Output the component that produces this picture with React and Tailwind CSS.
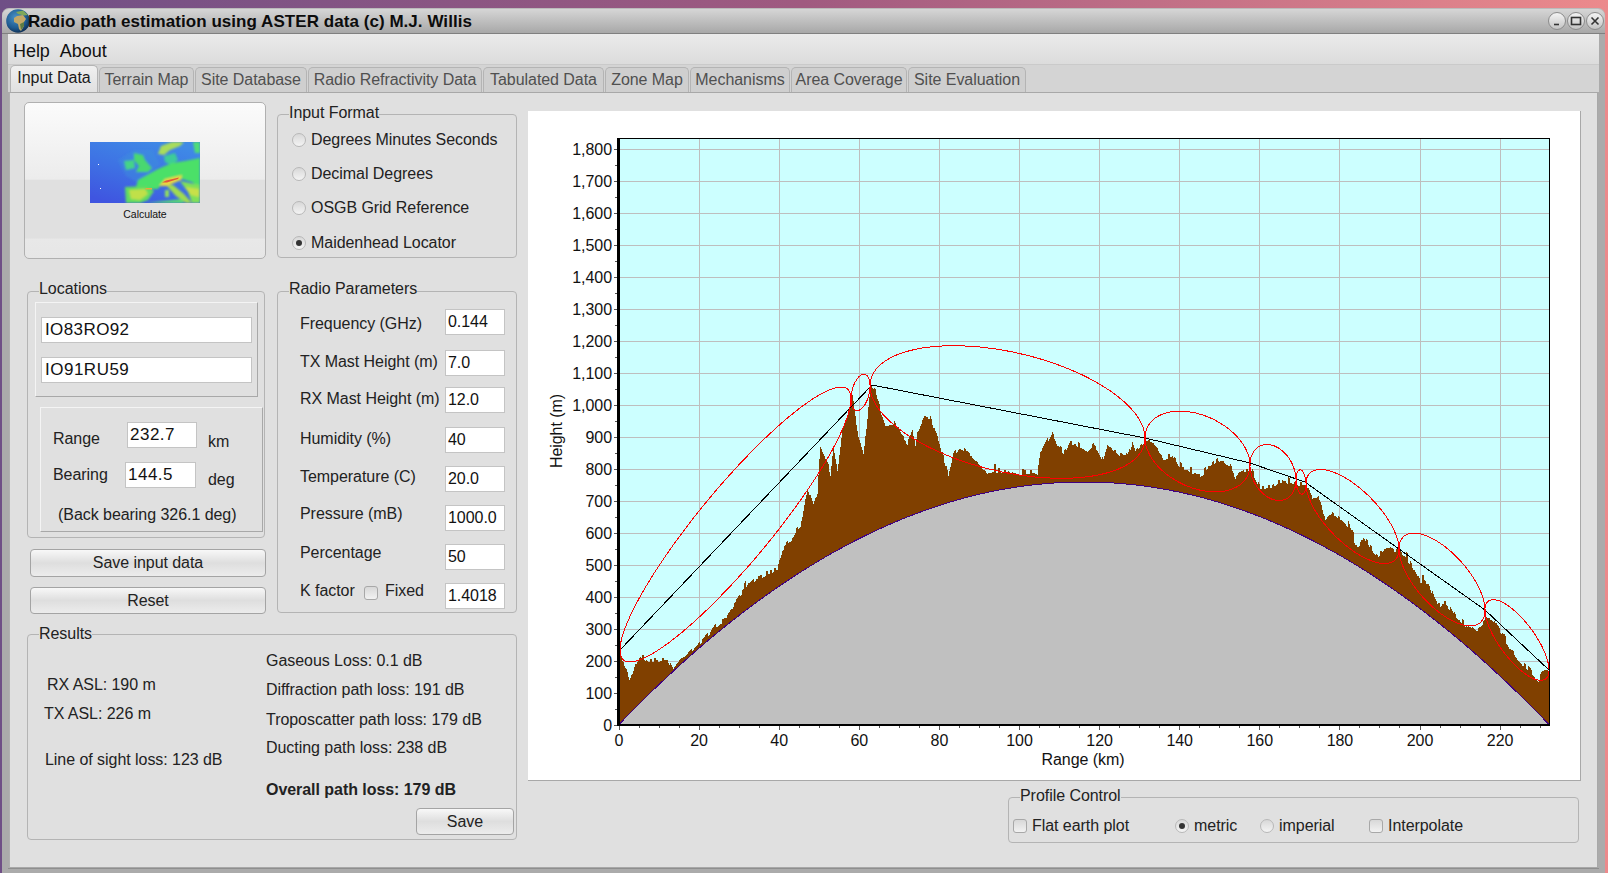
import React from "react";

const FONT = "font-['Liberation_Sans',Arial,sans-serif]";

// terrain outline in page pixels, read off the plot
const ridge = [
  [619, 645], [620, 658], [625, 667], [629, 679], [635, 665], [640, 655], [647, 660], [655, 660], [667, 660], [673, 668],
  [680, 660], [687, 652], [697, 645], [703, 640], [713, 627], [725, 620], [728, 612], [737, 600], [747, 585], [760, 577],
  [777, 568], [782, 550], [800, 527], [807, 488], [813, 505], [817, 493], [820, 445], [828, 463], [830, 478], [833, 448],
  [837, 475], [842, 430], [852, 398], [858, 438], [863, 455], [870, 388], [875, 390], [885, 427], [893, 423], [907, 443],
  [912, 428], [915, 445], [917, 432], [923, 417], [930, 417], [937, 438], [943, 457], [948, 475], [953, 452], [960, 448],
  [973, 457], [987, 472], [1000, 470], [1013, 475], [1033, 472], [1037, 475], [1040, 453], [1052, 432], [1055, 440], [1063, 453],
  [1070, 442], [1087, 450], [1093, 445], [1103, 460], [1107, 445], [1117, 453], [1127, 455], [1132, 443], [1135, 452], [1145, 442],
  [1153, 442], [1163, 458], [1172, 455], [1180, 467], [1200, 475], [1217, 460], [1230, 467], [1235, 477], [1250, 468], [1260, 487],
  [1270, 487], [1280, 482], [1293, 483], [1305, 485], [1312, 497], [1318, 495], [1325, 522], [1332, 513], [1347, 525], [1357, 547],
  [1363, 537], [1370, 547], [1377, 555], [1390, 548], [1400, 553], [1410, 563], [1420, 582], [1428, 583], [1437, 605], [1445, 603],
  [1457, 618], [1475, 632], [1482, 627], [1485, 615], [1493, 620], [1505, 640], [1517, 660], [1530, 670], [1537, 683], [1542, 670],
  [1549, 673],
];

const earthY = (x) => {
  const t = (x - 618.5) / 931;
  return 725 - 243 * 4 * t * (1 - t);
};

const buildTerrain = () => {
  let seed = 7;
  const rnd = () => {
    seed = (seed * 16807) % 2147483647;
    return seed / 2147483647;
  };
  let d = "M619 725";
  let i = 0;
  let jitter = 0;
  for (let x = 619; x <= 1549; x++) {
    while (ridge[i + 1] && ridge[i + 1][0] < x) i++;
    const [x0, y0] = ridge[i];
    const [x1, y1] = ridge[i + 1] || ridge[i];
    const y = y0 + ((y1 - y0) * (x - x0)) / (x1 - x0 || 1);
    if (x % 2 === 0) jitter = (rnd() - 0.5) * 5 - (rnd() > 0.93 ? 5 : 0);
    d += `V${Math.round(Math.min(y + jitter, earthY(x)))}H${x + 1}`;
  }
  return d + "V725Z";
};

const earthLine = () => {
  let d = "M618.5 725";
  for (let x = 620; x <= 1550; x += 2) d += `L${x} ${earthY(x).toFixed(1)}`;
  return d;
};

// a fresnel zone is the chord with the radius added above and below it
const zone = ([ax, ay], [bx, by], r) => {
  let d = "";
  for (let i = 0; i <= 120; i++) {
    const th = (i / 120) * Math.PI * 2;
    const t = (1 - Math.cos(th)) / 2;
    d += `${i ? "L" : "M"}${(ax + (bx - ax) * t).toFixed(1)} ${(ay + (by - ay) * t - r * Math.sin(th)).toFixed(1)}`;
  }
  return d + "Z";
};

const zones = [
  [[620, 650], [851, 399], 56],
  [[851, 399], [870, 386], 17],
  [[870, 386], [1145, 438], 61],
  [[1145, 438], [1250, 465], 38],
  [[1250, 465], [1296, 480], 27],
  [[1296, 480], [1306, 484], 12],
  [[1306, 484], [1399, 549], 34],
  [[1399, 549], [1485, 610], 35],
  [[1485, 610], [1549, 670], 27],
];

const xOf = (km) => 619 + km * 4.005;
const yOf = (m) => 725 - m * 0.32;
const heights = Array.from({ length: 19 }, (_, i) => i * 100);
const ranges = Array.from({ length: 12 }, (_, i) => i * 20);

const Chart = () => (
  <svg viewBox="528 111 1052 670" className="block w-[1052px] h-[670px]" shapeRendering="crispEdges">
    <rect x="619" y="138" width="931" height="587" fill="#ccffff" />
    {heights.map((m) => (
      <line key={m} x1="619" x2="1550" y1={yOf(m)} y2={yOf(m)} stroke="#bebebe" />
    ))}
    {ranges.map((km) => (
      <line key={km} x1={xOf(km)} x2={xOf(km)} y1="138" y2="725" stroke="#bebebe" />
    ))}
    <path d={buildTerrain()} fill="#804000" />
    <path d={earthLine() + "V725H618.5Z"} fill="#c0c0c0" />
    <path d={earthLine()} fill="none" stroke="#400080" />
    <polyline
      points="620,650 872,385 1145,438 1250,463 1305,482 1399,549 1485,610 1549,670"
      fill="none"
      stroke="#000"
    />
    {zones.map(([a, b, r], i) => (
      <path key={i} d={zone(a, b, r)} fill="none" stroke="#ff0000" />
    ))}
    <rect x="619" y="138" width="931" height="1" fill="#000" />
    <rect x="1549" y="138" width="1" height="588" fill="#000" />
    <rect x="617" y="138" width="3" height="588" fill="#000" />
    <rect x="617" y="724" width="933" height="2" fill="#000" />
    {Array.from({ length: 37 }, (_, i) => (
      <line key={i} x1={i % 2 ? 615 : 614} x2="617" y1={yOf(i * 50)} y2={yOf(i * 50)} stroke="#555" />
    ))}
    {Array.from({ length: 47 }, (_, i) => (
      <line key={i} x1={xOf(i * 5)} x2={xOf(i * 5)} y1="726" y2={i % 4 ? 728 : 730} stroke="#555" />
    ))}
    <g fontFamily="'Liberation Sans', Arial, sans-serif" fontSize="16" fill="#111" shapeRendering="auto">
      {heights.map((m) => (
        <text key={m} x="612" y={yOf(m) + 6} textAnchor="end">
          {m.toLocaleString("en-US")}
        </text>
      ))}
      {ranges.map((km) => (
        <text key={km} x={xOf(km)} y="746" textAnchor="middle">
          {km}
        </text>
      ))}
      <text x="1083" y="765" textAnchor="middle">Range (km)</text>
      <text transform="translate(562 431) rotate(-90)" textAnchor="middle">Height (m)</text>
    </g>
  </svg>
);

const EuropeMap = () => (
  <svg viewBox="0 0 110 61" className="block w-[110px] h-[61px] mx-auto">
    <defs>
      <linearGradient id="sea" x1="0.7" y1="0" x2="0.2" y2="1">
        <stop offset="0" stopColor="#3f8ae6" />
        <stop offset="0.5" stopColor="#3e72e4" />
        <stop offset="1" stopColor="#3f55e0" />
      </linearGradient>
      <filter id="soft" x="-5%" y="-5%" width="110%" height="110%"><feGaussianBlur stdDeviation="1" /></filter>
    </defs>
    <rect width="110" height="61" fill="url(#sea)" />
    <g filter="url(#soft)">
      <path d="M28 18L44 8 62 8 70 22 50 42 36 34Z" fill="#3e96da" opacity="0.35" />
      <path d="M68 12L71 4 82 0 94 0 90 4 80 8 74 13Z" fill="#a8dc5c" />
      <path d="M103 0H110V11H105Z" fill="#50dc78" />
      <path d="M74 14L85 11 88 18 81 23 75 20Z" fill="#3ecc98" />
      <path d="M44 11L53 13 55 18 62 26 58 30 46 30 49 24 44 18Z" fill="#48d870" />
      <path d="M34 19L44 18 45 26 36 28Z" fill="#44d488" />
      <path d="M48 38L68 27 82 21 95 19 110 16V46L102 40 92 37 82 37 72 41 68 47 60 47 46 45Z" fill="#4ce068" />
      <path d="M35 45L56 44 64 49 58 58 50 61H36Z" fill="#60dc60" />
      <path d="M39 48L55 47 58 52 50 58 41 57Z" fill="#c0e048" />
      <path d="M90 39L110 43V61H102L98 50Z" fill="#80e058" />
      <path d="M95 45L109 47 109 55 101 53Z" fill="#c8e048" />
      <path d="M76 43L83 43 94 52 102 61 96 61 86 54Z" fill="#a0dc50" />
      <path d="M75 48H79V55H75Z" fill="#90dc60" />
      <path d="M56 61L92 57 94 61Z" fill="#58dc70" />
      <path d="M69 44L75 37 92 33 91 38 77 44Z" fill="#e8d840" />
    </g>
    <path d="M72 40.5L76 38.5 89 35.5 88 37 77 40.5Z" fill="#e0583c" />
    <path d="M55.5 46L62 46 62 47.5 55.5 47.5Z" fill="#e8a83c" />
    <g shapeRendering="crispEdges">
      <rect x="8" y="22" width="1" height="1" fill="#fff" />
      <rect x="10" y="46" width="1" height="1" fill="#fff" />
    </g>
  </svg>
);

const Globe = () => (
  <svg viewBox="0 0 24 24" className="w-[24px] h-[24px] shrink-0 relative">
    <defs>
      <radialGradient id="ball" cx="0.4" cy="0.35" r="0.75">
        <stop offset="0" stopColor="#4a92c6" />
        <stop offset="0.6" stopColor="#1f5a90" />
        <stop offset="1" stopColor="#0a2140" />
      </radialGradient>
    </defs>
    <circle cx="12" cy="12" r="11.8" fill="url(#ball)" />
    <path d="M11 7L17 6 20 10 18 13 18 17 15 22 13 20 12 15 8 13 8 9Z" fill="#c4a868" />
    <path d="M10 3L17 1.5 22 6 18 6.5 12 5Z" fill="#7fa85a" />
    <path d="M14 15L18 13 18 17 15 21Z" fill="#5c7c44" />
  </svg>
);

const WinButton = ({ children }) => (
  <span className="w-[18px] h-[18px] rounded-full border border-[#8c8c8c] bg-gradient-to-b from-[#f4f4f4] to-[#c4c4c4] flex items-center justify-center">
    <svg viewBox="0 0 12 12" className="w-[12px] h-[12px]" fill="none" stroke="#333" strokeWidth="1.6">
      {children}
    </svg>
  </span>
);

const tabs = [
  ["Input Data", "w-[88px]"],
  ["Terrain Map", "w-[95px]"],
  ["Site Database", "w-[112px]"],
  ["Radio Refractivity Data", "w-[174px]"],
  ["Tabulated Data", "w-[121px]"],
  ["Zone Map", "w-[84px]"],
  ["Mechanisms", "w-[100px]"],
  ["Area Coverage", "w-[116px]"],
  ["Site Evaluation", "w-[118px]"],
];

const Group = ({ title, className, legendClass = "", children }) => (
  <fieldset className={`border border-[#b4b4b4] rounded-[4px] min-w-0 ${className}`}>
    <legend className={`ml-[11px] text-[16px] leading-[18px] text-[#222] ${legendClass}`}>{title}</legend>
    {children}
  </fieldset>
);

const Radio = ({ on }) => (
  <span className="w-[14px] h-[14px] shrink-0 rounded-full border border-[#b8b8b8] bg-gradient-to-b from-[#d8d8d8] to-[#f4f4f4] flex items-center justify-center">
    {on && <span className="w-[6px] h-[6px] rounded-full bg-[#333]" />}
  </span>
);

const Check = ({ className = "" }) => (
  <span className={`w-[14px] h-[14px] shrink-0 rounded-[3px] border border-[#a8a8a8] bg-gradient-to-b from-[#d8d8d8] to-[#f2f2f2] ${className}`} />
);

const Btn = ({ className, children }) => (
  <button className={`block rounded-[4px] border border-[#a4a4a4] bg-gradient-to-b from-[#f8f8f8] via-[#dedede] to-[#ececec] text-[16px] text-[#222] ${className}`}>
    {children}
  </button>
);

const Box = ({ value, className }) => (
  <input
    readOnly
    value={value}
    className={`block bg-white border border-[#c4c4c4] outline-none px-[2px] text-[#111] ${className}`}
  />
);

const formats = [
  ["Degrees Minutes Seconds", false, "mt-[8px]"],
  ["Decimal Degrees", false, "mt-[16px]"],
  ["OSGB Grid Reference", false, "mt-[16px]"],
  ["Maidenhead Locator", true, "mt-[17px]"],
];

const params = [
  ["Frequency (GHz)", "0.144", "mb-[15px]", "mt-[3px]"],
  ["TX Mast Height (m)", "7.0", "mb-[11px]", "mt-0"],
  ["RX Mast Height (m)", "12.0", "mb-[14px]", "mt-0"],
  ["Humidity (%)", "40", "mb-[13px]", "mt-0"],
  ["Temperature (C)", "20.0", "mb-[13px]", "-mt-[1px]"],
  ["Pressure (mB)", "1000.0", "mb-[13px]", "-mt-[3px]"],
  ["Percentage", "50", "mb-[13px]", "-mt-[3px]"],
];

export default function App() {
  return (
    <div className={`w-[1608px] h-[873px] overflow-hidden bg-gradient-to-r from-[#6f4f86] via-[#a05a80] to-[#ec8a8c] pt-[8px] pl-[2px] pr-[3px] text-[16px] tracking-[-0.05px] text-[#222] ${FONT}`}>
      <div className="h-[865px] rounded-t-[7px] bg-[#ababab] border-t border-[#bbb] flex flex-col">
        {/* title bar */}
        <div className="h-[25px] shrink-0 rounded-t-[7px] bg-gradient-to-b from-[#d6d6d6] to-[#a8a8a8] border-b border-[#808080] flex items-center pl-[4px] pr-[1px]">
          <Globe />
          <span className="-ml-[2px] mt-[2px] relative text-[17px] font-bold tracking-[0.05px] text-[#0c0c0c] whitespace-nowrap">
            Radio path estimation using ASTER data (c) M.J. Willis
          </span>
          <div className="ml-auto flex gap-[1px]">
            <WinButton><path d="M3 9.5H8" /></WinButton>
            <WinButton><rect x="1.5" y="2.5" width="9" height="7" /></WinButton>
            <WinButton><path d="M2.5 2.5L9.5 9.5M9.5 2.5L2.5 9.5" /></WinButton>
          </div>
        </div>

        <div className="flex-1 mx-[6px] mb-[4px] min-h-0 flex flex-col border-b border-[#8e8e8e]">
          {/* menu */}
          <div className="h-[30px] shrink-0 bg-gradient-to-b from-[#ebebeb] to-[#dcdcdc] flex items-center pl-[5px] pt-[5px] gap-[10px] text-[18px] text-[#111]">
            <span>Help</span>
            <span>About</span>
          </div>

          {/* tabs */}
          <div className="h-[28px] shrink-0 bg-[#d4d4d4] border-t border-[#cacaca] flex items-end pl-[2px] gap-[1px]">
            {tabs.map(([name, w], i) => (
              <div
                key={name}
                className={`${w} shrink-0 text-center rounded-t-[5px] border border-b-0 border-[#b4b4b4] ${
                  i === 0
                    ? "h-[27px] leading-[24px] bg-gradient-to-b from-[#f0f0f0] to-[#e0e0e0] text-[#1a1a1a]"
                    : "h-[25px] leading-[24px] bg-[#cfcfcf] text-[#505050]"
                }`}
              >
                {name}
              </div>
            ))}
          </div>

          {/* page */}
          <div className="flex-1 min-h-0 ml-[1px] mr-[1px] bg-[#e0e0e0] border border-[#a8a8a8] border-l-[#b0b0b0] flex">
            <div className="w-[518px] shrink-0 pl-[14px]">
              <div className="flex mt-[9px]">
                <button className="w-[242px] h-[157px] shrink-0 rounded-[5px] border border-[#b0b0b0] pt-[2px] bg-[linear-gradient(#fbfbfb_0%,#ececec_49%,#e0e0e0_50%,#e0e0e0_87%,#e8e8e8_88%,#e6e6e6_100%)]">
                  <EuropeMap />
                  <span className="block text-[10.5px] leading-[14px] mt-[4px] text-[#111]">Calculate</span>
                </button>
                <Group title="Input Format" legendClass="-translate-y-[1px]" className="ml-[11px] mt-[3px] w-[240px] h-[153px]">
                  {formats.map(([label, on, mt]) => (
                    <div key={label} className={`flex items-center gap-[5px] pl-[14px] h-[18px] ${mt}`}>
                      <Radio on={on} />
                      <span className="whitespace-nowrap">{label}</span>
                    </div>
                  ))}
                </Group>
              </div>

              <div className="flex mt-[23px]">
                <div className="w-[242px] shrink-0">
                  <Group title="Locations" legendClass="-translate-y-[2px]" className="ml-[3px] w-[238px] h-[256px]">
                    <div className="ml-[7px] mt-[2px] w-[223px] h-[95px] border border-[#a8a8a8] border-t-[#f4f4f4] border-l-[#f4f4f4] pt-[14px]">
                      <Box value="IO83RO92" className="ml-[5px] w-[211px] h-[26px] pl-[3px] text-[17px] tracking-[0.4px]" />
                      <Box value="IO91RU59" className="ml-[5px] mt-[14px] w-[211px] h-[26px] pl-[3px] text-[17px] tracking-[0.5px]" />
                    </div>
                    <div className="ml-[12px] mt-[10px] w-[223px] h-[125px] border border-[#a8a8a8] border-t-[#f4f4f4] border-l-[#f4f4f4] pl-[12px] pt-[14px]">
                      <div className="flex items-start h-[26px]">
                        <span className="w-[74px] mt-[5px]">Range</span>
                        <Box value="232.7" className="w-[70px] h-[26px] text-[17px] tracking-[0.5px]" />
                        <span className="ml-[11px] mt-[8px]">km</span>
                      </div>
                      <div className="flex items-start h-[26px] mt-[14px]">
                        <span className="w-[72px] mt-[1px]">Bearing</span>
                        <Box value="144.5" className="w-[71px] h-[26px] text-[17px] tracking-[0.5px]" />
                        <span className="ml-[12px] mt-[6px]">deg</span>
                      </div>
                      <div className="mt-[15px] ml-[5px] whitespace-nowrap">(Back bearing 326.1 deg)</div>
                    </div>
                  </Group>
                  <Btn className="ml-[6px] mt-[11px] w-[236px] h-[28px]">Save input data</Btn>
                  <Btn className="ml-[6px] mt-[10px] w-[236px] h-[27px]">Reset</Btn>
                </div>
                <Group title="Radio Parameters" legendClass="-translate-y-[2px]" className="ml-[11px] w-[240px] h-[331px]">
                  <div className="pt-[9px]">
                    {params.map(([label, value, mb, mt]) => (
                      <div key={label} className={`flex items-start h-[26px] pl-[22px] ${mb}`}>
                        <span className={`w-[145px] whitespace-nowrap ${mt}`}>{label}</span>
                        <Box value={value} className="w-[60px] h-[26px] text-[16px]" />
                      </div>
                    ))}
                    <div className="flex items-center h-[26px] pl-[22px]">
                      <span className="w-[64px] whitespace-nowrap -mt-[10px]">K factor</span>
                      <Check className="-mt-[6px]" />
                      <span className="ml-[7px] w-[60px] -mt-[10px]">Fixed</span>
                      <Box value="1.4018" className="w-[60px] h-[26px] text-[16px]" />
                    </div>
                  </div>
                </Group>
              </div>

              <Group title="Results" className="ml-[3px] mt-[11px] w-[490px] h-[215px]">
                <div className="flex">
                  <div className="w-[238px] shrink-0 pt-[33px]">
                    <div className="ml-[19px] leading-[18px]">RX ASL: 190 m</div>
                    <div className="ml-[16px] mt-[11px] leading-[18px]">TX ASL: 226 m</div>
                    <div className="ml-[17px] mt-[28px] leading-[18px]">Line of sight loss: 123 dB</div>
                  </div>
                  <div className="pt-[9px] leading-[18px] whitespace-nowrap">
                    <div>Gaseous Loss: 0.1 dB</div>
                    <div className="mt-[11px]">Diffraction path loss: 191 dB</div>
                    <div className="mt-[12px]">Troposcatter path loss: 179 dB</div>
                    <div className="mt-[10px]">Ducting path loss: 238 dB</div>
                    <div className="mt-[24px] font-bold">Overall path loss: 179 dB</div>
                    <Btn className="ml-[150px] mt-[9px] w-[98px] h-[27px]">Save</Btn>
                  </div>
                </div>
              </Group>
            </div>

            <div className="flex-1 min-w-0 pt-[18px]">
              <div className="w-[1053px] h-[670px] bg-white border-r border-b border-[#a8a8a8]">
                <Chart />
              </div>
              <Group title="Profile Control" legendClass="-translate-y-[1px]" className="ml-[480px] mt-[7px] w-[571px] h-[55px]">
                <div className="flex items-center h-[40px] pl-[4px]">
                  <Check />
                  <span className="ml-[5px] w-[143px]">Flat earth plot</span>
                  <Radio on />
                  <span className="ml-[5px] w-[66px]">metric</span>
                  <Radio />
                  <span className="ml-[5px] w-[90px]">imperial</span>
                  <Check />
                  <span className="ml-[5px]">Interpolate</span>
                </div>
              </Group>
            </div>
          </div>
        </div>
      </div>
    </div>
  );
}
